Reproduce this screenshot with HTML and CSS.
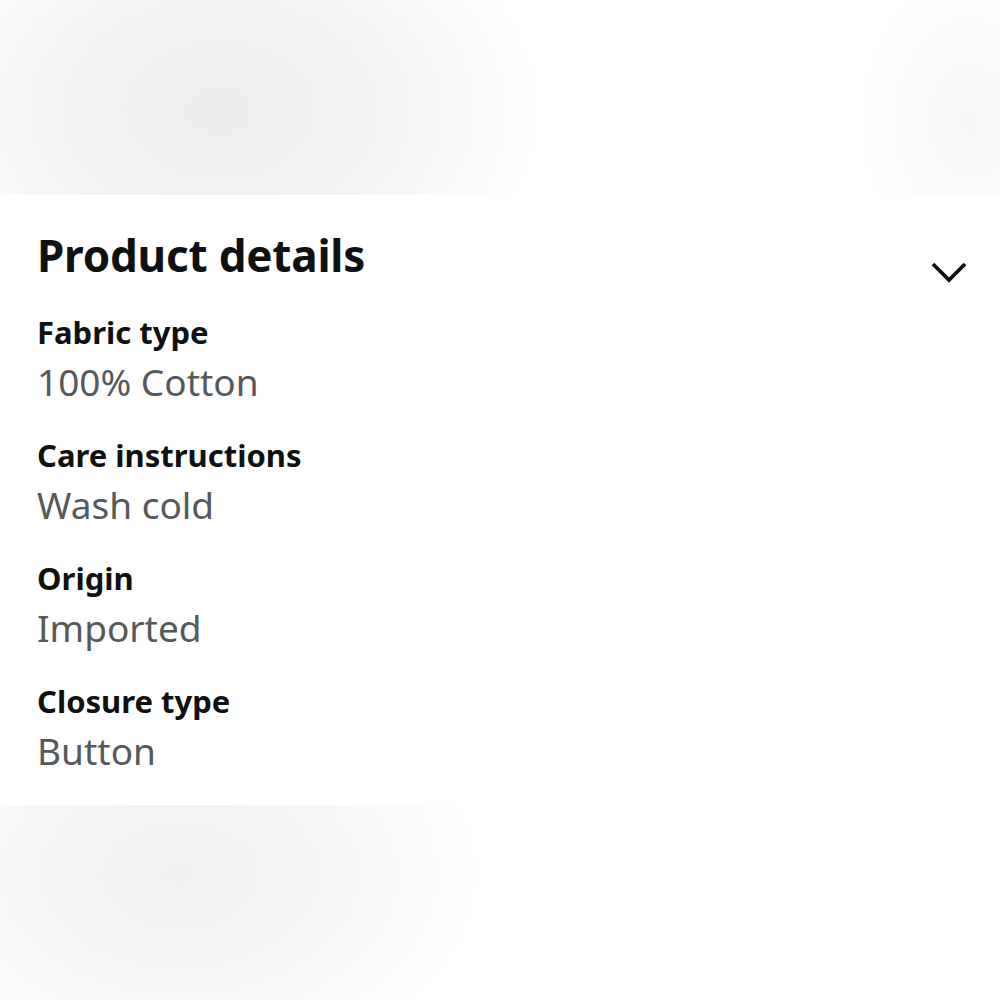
FILE: index.html
```html
<!DOCTYPE html>
<html>
<head>
<meta charset="utf-8">
<link rel="stylesheet" href="styles.css">
</head>
<body>
<div class="page">
  <div class="backdrop backdrop-top"></div>
  <section class="panel">
    <div class="panel-head">
      <h2 class="title">Product details</h2>
      <svg class="chevron" width="38" height="26" viewBox="0 0 38 26"><path d="M3 4 L19 20 L35 4" fill="none" stroke="#0f1111" stroke-width="3.8"/></svg>
    </div>
    <dl class="details">
      <div class="item"><dt>Fabric type</dt><dd>100% Cotton</dd></div>
      <div class="item"><dt>Care instructions</dt><dd>Wash cold</dd></div>
      <div class="item"><dt>Origin</dt><dd>Imported</dd></div>
      <div class="item"><dt>Closure type</dt><dd>Button</dd></div>
    </dl>
  </section>
  <div class="backdrop backdrop-bottom"></div>
</div>
</body>
</html>
```
FILE: styles.css
```css
html, body { margin: 0; padding: 0; background: #fff; }
body { font-family: "Noto Sans", "Open Sans", sans-serif; color: #0f1111; }
.page { width: 1000px; height: 1000px; display: flex; flex-direction: column; overflow: hidden; }
.backdrop { height: 195px; flex: none; }
.backdrop-top {
  background:
    radial-gradient(ellipse 320px 230px at 220px 110px, #ededed 0%, #f3f3f3 50%, rgba(255,255,255,0) 100%),
    radial-gradient(ellipse 110px 150px at 970px 120px, #f7f7f7 0%, rgba(255,255,255,0) 100%),
    #fff;
}
.backdrop-bottom {
  background:
    radial-gradient(ellipse 300px 200px at 180px 70px, #f0f0f0 0%, #f5f5f5 45%, rgba(255,255,255,0) 100%),
    #fff;
}
.panel { height: 610px; flex: none; background: #fff; padding: 32px 0 0 37px; box-sizing: border-box; }
.panel-head { display: flex; justify-content: space-between; align-items: flex-start; padding-right: 32px; }
.title { margin: 0; font-size: 44px; line-height: 56px; font-weight: 700; letter-spacing: -0.2px; }
.chevron { margin-top: 33px; }
.details { margin: 24px 0 0; padding: 0; display: flex; flex-direction: column; gap: 23px; }
.item dt { font-size: 31px; line-height: 44px; font-weight: 700; }
.item dd { margin: 0; font-size: 37px; line-height: 56px; color: #565959; }
```
